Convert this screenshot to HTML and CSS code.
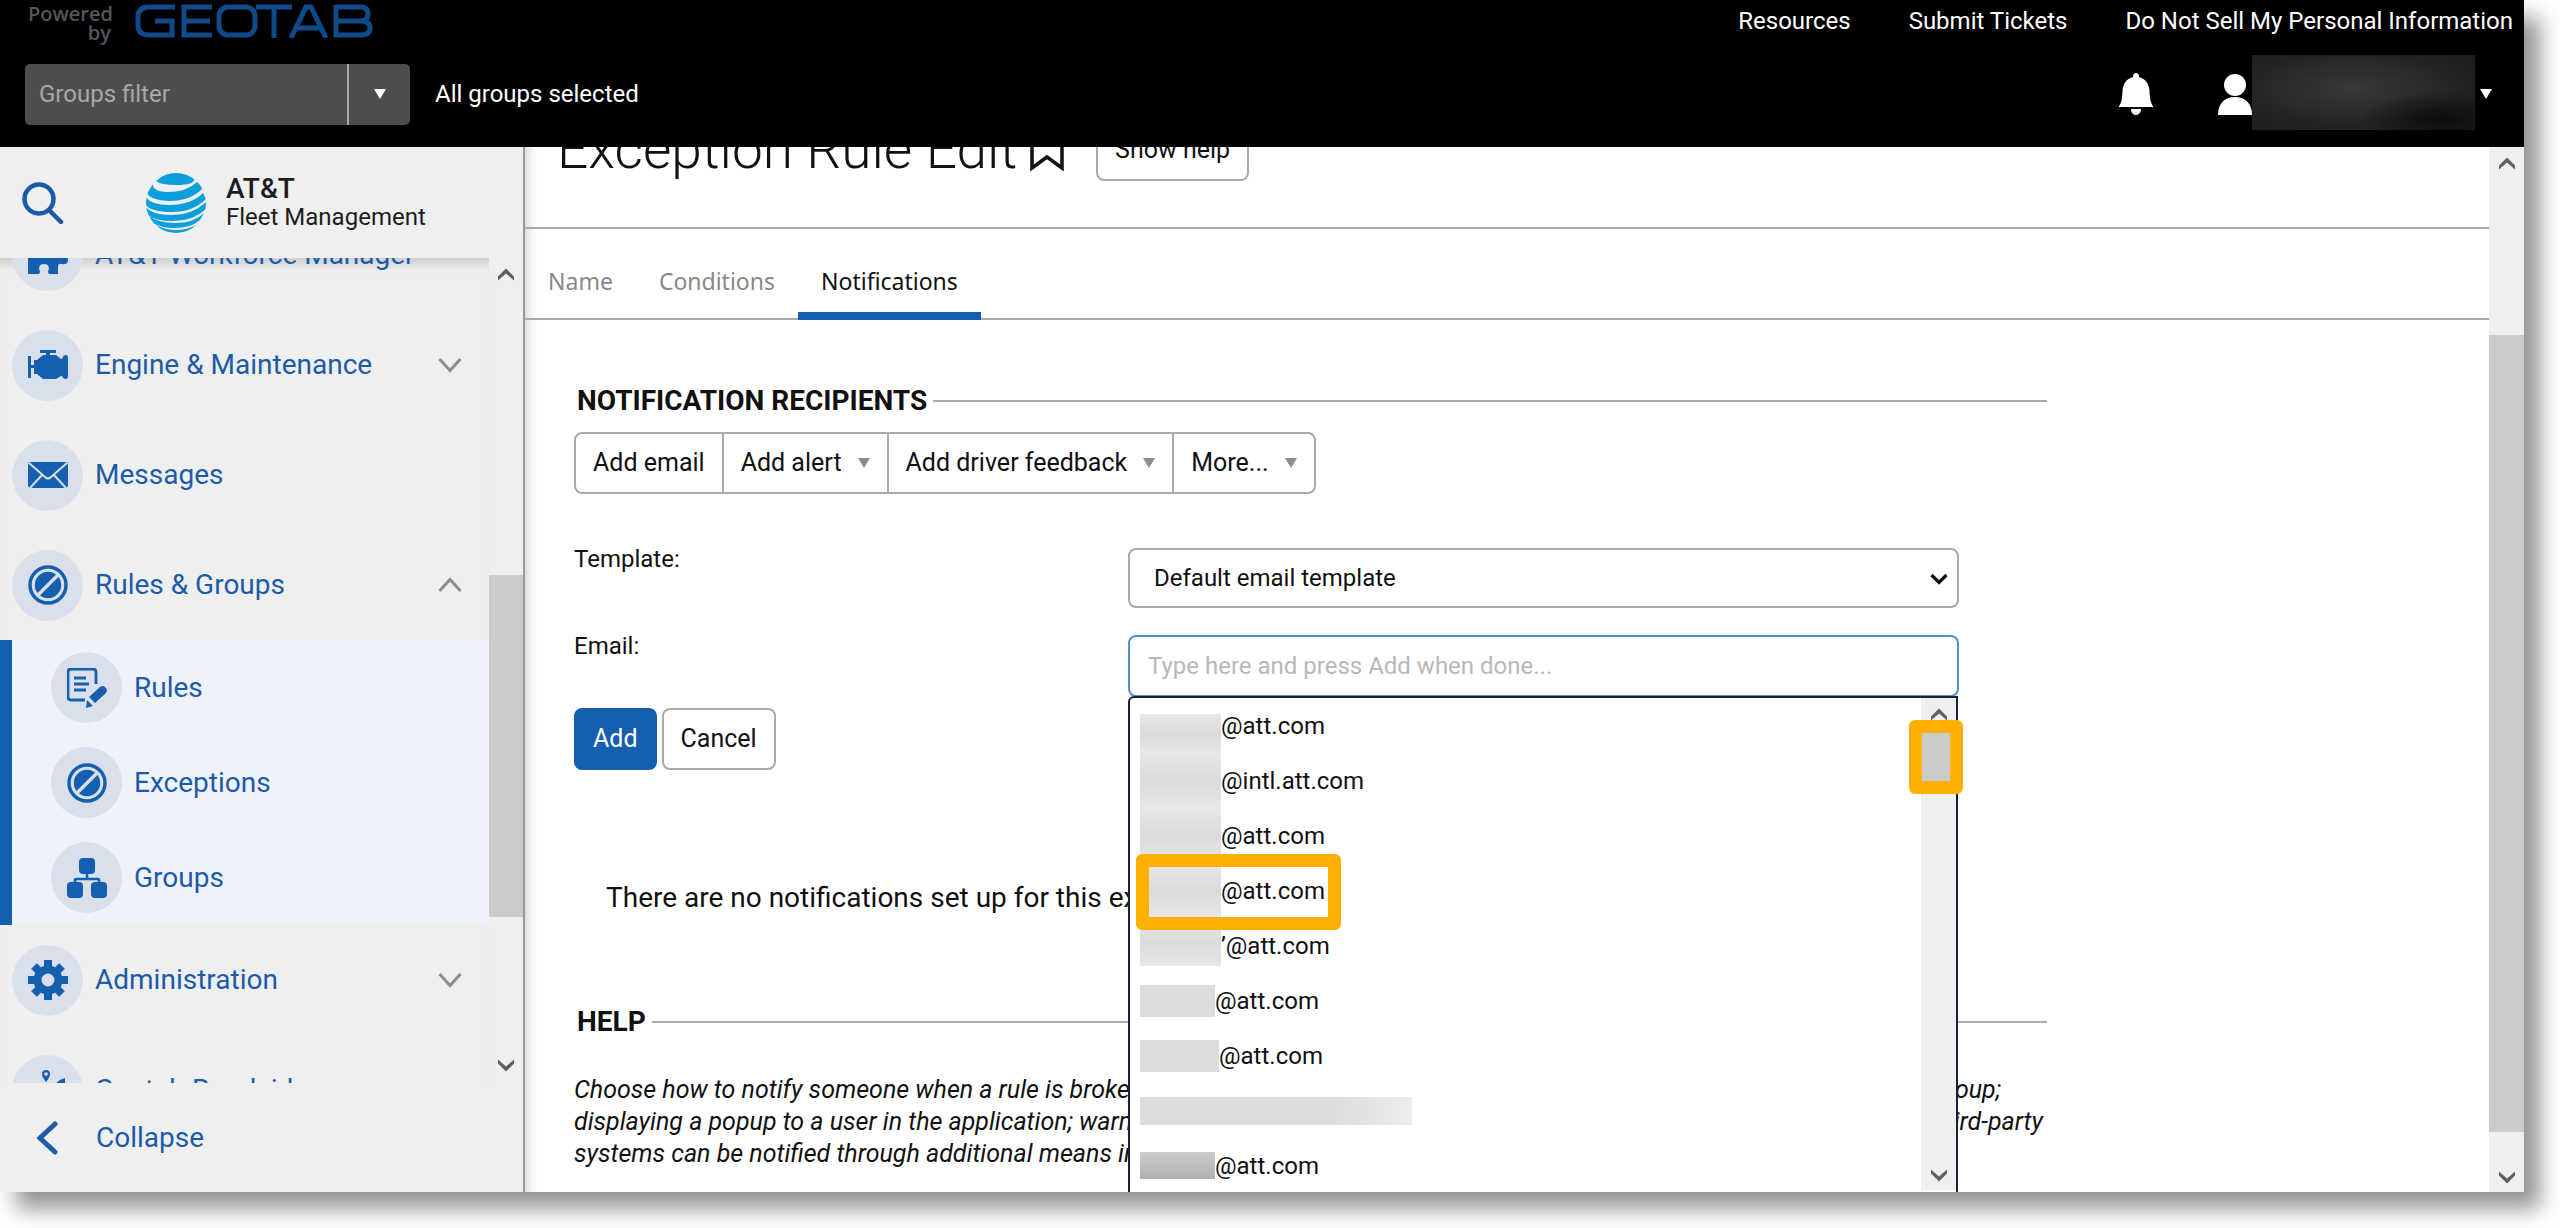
FILE: index.html
```html
<!DOCTYPE html>
<html lang="en">
<head>
<meta charset="utf-8">
<title>Exception Rule Edit</title>
<link rel="stylesheet" href="styles.css">
</head>
<body>
<svg class="sprite" aria-hidden="true">
  <symbol id="ban" viewBox="0 0 40 40"><circle cx="20" cy="20" r="18" fill="none" stroke="currentColor" stroke-width="3.4"/><circle cx="20" cy="20" r="13.2" fill="currentColor"/><path d="M10 30 30 10" stroke="#d9dfeb" stroke-width="3.4"/></symbol>
  <symbol id="down" viewBox="0 0 24 16"><path d="M1.500 2 12 13.500 22.500 2" fill="none" stroke="currentColor" stroke-width="3"/></symbol>
  <symbol id="up" viewBox="0 0 24 16"><path d="M1.500 14 12 2.500 22.500 14" fill="none" stroke="currentColor" stroke-width="3"/></symbol>
  <symbol id="bar-up" viewBox="0 0 18 14"><path d="M1 12.500v-4L9 .5l8 8v4L9 5.500z" fill="currentColor"/></symbol>
  <symbol id="bar-down" viewBox="0 0 18 14"><path d="M1 1.500v4l8 8 8-8v-4L9 8.500z" fill="currentColor"/></symbol>
  <symbol id="tri" viewBox="0 0 12 10"><path d="M0 0h12L6 10z" fill="currentColor"/></symbol>
</svg>

<div class="app">
  <header class="top">
    <div class="top-row">
      <div class="powered">
        <span class="powered-by">Powered<br>by</span>
        <svg class="geotab" viewBox="0 0 238 34" role="img" aria-label="Geotab">
          <g fill="none" stroke="currentColor" stroke-width="5">
            <path d="M40 3H14Q3 3 3 13v8q0 10 11 10h23V17H20"/>
            <path d="M77 3H49v28h28M49 17h26"/>
            <rect x="84" y="3" width="36" height="28" rx="9"/>
            <path d="M121 3h36M139 3v31"/>
            <path d="m156 34 15-31h5l15 31M161 24h25"/>
            <path d="M201 3h24q8 0 8 7t-8 7h-24m24 0q10 0 10 7t-10 7h-24V1"/>
          </g>
        </svg>
      </div>
      <nav class="top-links">
        <a href="#">Resources</a>
        <a href="#">Submit Tickets</a>
        <a href="#">Do Not Sell My Personal Information</a>
      </nav>
    </div>
    <div class="filter-row">
      <div class="filter">
        <input type="text" placeholder="Groups filter" aria-label="Groups filter">
        <button type="button" aria-label="Open groups filter"><svg class="tri"><use href="#tri"/></svg></button>
      </div>
      <span class="selected">All groups selected</span>
      <div class="account">
        <button type="button" class="bare bell" aria-label="Alerts"><svg width="36" height="42" viewBox="0 0 36 42"><path d="M18 0c2 0 3 1.500 3 4 7 2 10 7 10.500 14 .4 8 1.200 12 4 16H.5c3-4 3.700-8 4-16C5 11 8 6 15 4c0-2.500 1-4 3-4zM13 36h10c0 3.500-2 6-5 6s-5-2.500-5-6z" fill="currentColor"/></svg></button>
        <button type="button" class="bare user" aria-label="Account"><svg width="34" height="41" viewBox="0 0 34 41"><ellipse cx="17" cy="11" rx="11" ry="11" fill="currentColor"/><path d="M0 41c0-11 6-18 17-18s17 7 17 18z" fill="currentColor"/></svg><span class="redacted-name"></span><svg class="tri"><use href="#tri"/></svg></button>
      </div>
    </div>
  </header>

  <div class="body">
    <aside class="side">
      <div class="brand">
        <button type="button" class="bare search" aria-label="Search"><svg width="42" height="42" viewBox="0 0 42 42" fill="none" stroke="currentColor" stroke-width="4.500"><circle cx="17" cy="17" r="14.500"/><path d="m27 28 12 12" stroke-linecap="round"/></svg></button>
        <svg class="globe" viewBox="0 0 60 62"><defs><clipPath id="ball"><circle cx="30" cy="31" r="30"/></clipPath></defs>
          <g clip-path="url(#ball)" fill="#0c9fdc">
            <path d="M10 9Q30-10 48 6q2 7-17 7Q14 13 10 9z"/>
            <path d="M7 12q-1 7 14 8 20 0 30-10 6 2 5 7-12 12-32 12Q4 28 1 21z"/>
            <path d="M-1 24q5 9 24 9 22 0 34-12l3 6q-13 13-34 13Q5 40 0 33z"/>
            <path d="M-1 34q6 9 26 9 22 0 36-14v7q-13 13-34 13Q9 49 2 43z"/>
            <path d="M3 44q9 7 26 7 19 0 29-10l-4 7q-9 8-26 8-13 0-21-5z"/>
            <path d="M10 53q9 5 20 5t20-5l-7 6q-13 4-27 0z"/>
          </g></svg>
        <div class="brand-name"><strong>AT&amp;T</strong><span>Fleet Management</span></div>
      </div>
      <div class="side-scroll">
        <nav class="menu">
          <a class="item" href="#"><span class="disc"><svg viewBox="0 0 40 40"><path d="M0 12h10c-3-6 0-10 5-10s8 4 5 10h10v8q0 4 3 2 7-3 7 3 0 5-6 4-4-1-4 3v7h-9q-2-2 0-5 0-5-5-5t-5 5q2 3 0 5H0z" fill="currentColor"/></svg></span>AT&amp;T Workforce Manager</a>
          <a class="item" href="#"><span class="disc"><svg viewBox="0 0 40 40"><path d="M0 11h3v9h3v-5h3l6-5h3V8h-6V5h16v3h-6v2h6l5 4h1q1-4 4-4 2 0 2 3v18q0 3-2 3-3 0-4-3h-1l-5 3H15l-6-5H6v-6H3v10H0z" fill="currentColor"/></svg></span>Engine &amp; Maintenance<svg class="chev"><use href="#down"/></svg></a>
          <a class="item" href="#"><span class="disc"><svg viewBox="0 0 40 40"><rect y="7" width="40" height="26" rx="3" fill="currentColor"/><path d="m1 8 16 14q3 3 6 0L39 8M2 33l12-13M38 33 26 20" fill="none" stroke="#d9dfeb" stroke-width="2"/></svg></span>Messages</a>
          <a class="item" href="#"><span class="disc"><svg><use href="#ban"/></svg></span>Rules &amp; Groups<svg class="chev"><use href="#up"/></svg></a>
          <div class="sub">
            <a class="item" href="#"><span class="disc"><svg viewBox="0 0 40 40"><path d="M18 32H4q-3 0-3-3V4q0-3 3-3h22q3 0 3 3v12M7 10h12M7 16h15M7 22h12" fill="none" stroke="currentColor" stroke-width="2.800"/><path d="m22 29 11-10q3-2 5.500 0.500t0.500 5.500L28 35zM20 32l6 6-7 2z" fill="currentColor"/></svg></span>Rules</a>
            <a class="item" href="#"><span class="disc"><svg><use href="#ban"/></svg></span>Exceptions</a>
            <a class="item" href="#"><span class="disc"><svg viewBox="0 0 40 40"><g fill="currentColor"><rect x="12" width="16" height="16" rx="4"/><rect y="24" width="16" height="16" rx="4"/><rect x="24" y="24" width="16" height="16" rx="4"/></g><path d="M20 14v7M8 26v-4q0-1 1-1h22q1 0 1 1v4" fill="none" stroke="currentColor" stroke-width="2.600"/></svg></span>Groups</a>
          </div>
          <a class="item" href="#"><span class="disc"><svg viewBox="0 0 40 40"><circle cx="20" cy="20" r="10.500" fill="none" stroke="currentColor" stroke-width="8"/><path d="M20 0v8M20 32v8M0 20h8M32 20h8M6 6l6 6M28 28l6 6M34 6l-6 6M12 28l-6 6" stroke="currentColor" stroke-width="8"/></svg></span>Administration<svg class="chev"><use href="#down"/></svg></a>
          <a class="item" href="#"><span class="disc"><svg viewBox="0 0 40 40"><path d="M18 12q-4-5-4-8a4 4 0 0 1 8 0q0 3-4 8zM28 14q2-4 9-6v7q-6 0-8 6z" fill="currentColor"/><circle cx="18" cy="4" r="1.800" fill="#d9dfeb"/></svg></span>Geotab Roadside</a>
        </nav>
        <div class="bar side-bar"><svg><use href="#bar-up"/></svg><i class="before"></i><i class="thumb"></i><i class="after"></i><svg><use href="#bar-down"/></svg></div>
      </div>
      <button type="button" class="bare collapse"><svg width="22" height="34" viewBox="0 0 22 34"><path d="M19 3 4 17l15 14" fill="none" stroke="currentColor" stroke-width="5" stroke-linecap="round"/></svg>Collapse</button>
    </aside>

    <main class="main">
      <div class="content">
        <div class="title">
          <h1>Exception Rule Edit</h1>
          <svg class="bookmark" viewBox="0 0 34 42"><path d="M2 0v38l15-11 15 11V0" fill="none" stroke="currentColor" stroke-width="3.500"/></svg>
          <button type="button" class="btn">Show help</button>
        </div>
        <nav class="tabs">
          <a href="#">Name</a><a href="#">Conditions</a><a href="#" class="on" aria-current="page">Notifications</a>
        </nav>
        <div class="page">
          <h2>NOTIFICATION RECIPIENTS</h2>
          <div class="group">
            <button type="button">Add email</button>
            <button type="button">Add alert <svg class="tri"><use href="#tri"/></svg></button>
            <button type="button">Add driver feedback <svg class="tri"><use href="#tri"/></svg></button>
            <button type="button">More... <svg class="tri"><use href="#tri"/></svg></button>
          </div>
          <form class="form">
            <label for="template">Template:</label>
            <div class="field select">
              <select id="template"><option>Default email template</option></select>
              <svg viewBox="0 0 18 12"><path d="m1.500 2 7.500 7.500L16.500 2" fill="none" stroke="currentColor" stroke-width="3.200"/></svg>
            </div>
            <label for="email">Email:</label>
            <div class="field">
              <input id="email" type="text" placeholder="Type here and press Add when done...">
              <div class="list">
                <ul>
                  <li><i class="mask start"></i>@att.com</li>
                  <li><i class="mask"></i>@intl.att.com</li>
                  <li><i class="mask"></i>@att.com</li>
                  <li><i class="mask"></i>@att.com<b class="ring ring-option"></b></li>
                  <li><i class="mask end"></i>’@att.com</li>
                  <li><i class="mask short"></i>@att.com</li>
                  <li><i class="mask mid"></i>@att.com</li>
                  <li><i class="mask wide"></i></li>
                  <li><i class="mask short dark"></i>@att.com</li>
                </ul>
                <div class="bar list-bar"><svg><use href="#bar-up"/></svg><i class="thumb"><b class="ring ring-thumb"></b></i><i class="after"></i><svg><use href="#bar-down"/></svg></div>
              </div>
            </div>
            <div class="actions">
              <button type="submit" class="btn primary">Add</button>
              <button type="button" class="btn">Cancel</button>
            </div>
          </form>
          <p class="empty">There are no notifications set up for this exception rule.</p>
          <h2>HELP</h2>
          <div class="help">
            <p class="line first"><span>Choose how to notify someone when a rule is broken. Options include: emailing a</span> <span>person or group;</span></p>
            <p class="line"><span>displaying a popup to a user in the application; warning the driver in the vehicle.</span> <span>Third-party</span></p>
            <p class="line"><span>systems can be notified through additional means including web requests.</span></p>
          </div>
        </div>
      </div>
      <div class="bar main-bar"><svg><use href="#bar-up"/></svg><i class="before"></i><i class="thumb"></i><i class="after"></i><svg><use href="#bar-down"/></svg></div>
    </main>
  </div>
</div>
</body>
</html>
```
FILE: styles.css
```css
* { box-sizing: border-box; }

body {
  margin: 0;
  padding: 0 36px 36px 0;
  height: 100vh;
  overflow: hidden;
  background: #fff;
  color: #111;
  font: 24px/32px Roboto, "Liberation Sans", sans-serif;
}

a { color: inherit; text-decoration: none; }
button, input, select { font: inherit; color: inherit; margin: 0; cursor: pointer; }
h1, h2, p, ul { margin: 0; padding: 0; font: inherit; }
ul { list-style: none; }
.sprite { position: absolute; width: 0; height: 0; }
.bare { background: none; border: 0; padding: 0; }
.tri { width: 12px; height: 10px; flex: none; }

.app {
  display: flex;
  flex-direction: column;
  height: 100%;
  box-shadow: 16px 17px 20px #969696;
}

/* Header */
.top { height: 147px; flex: none; background: #000; color: #fff; overflow: hidden; }
.top-row { display: flex; justify-content: space-between; height: 44px; padding: 0 11px 0 28px; }
.powered { display: flex; gap: 24px; padding-top: 4px; }
.powered-by { width: 83px; color: #55555a; font: 600 20px/19px "Open Sans", sans-serif; text-align: right; }
.geotab { width: 238px; height: 34px; color: #0f4a8a; }
.top-links { display: flex; gap: 58px; padding-top: 5px; }
.filter-row { display: flex; align-items: center; height: 100px; padding: 0 32px 0 25px; }
.filter { display: flex; width: 385px; height: 61px; border-radius: 5px; overflow: hidden; background: #4d4d4d; }
.filter input { flex: 1; min-width: 0; padding: 0 14px; background: none; border: 0; }
.filter input::placeholder { color: #a8a8a8; opacity: 1; }
.filter button { width: 63px; padding: 0; background: none; border: 0; border-left: 2px solid #aaa; color: #fff; }
.filter .tri { display: block; margin: auto; }
.selected { margin-left: 25px; }
.account { display: flex; align-items: center; gap: 64px; margin-left: auto; color: #fff; }
.bare svg { display: block; }
.user { display: flex; align-items: center; color: #fff; }
.bell { color: #fff; }
.redacted-name { width: 223px; height: 75px; margin: 0 5px 4px 0; background: radial-gradient(ellipse at 85% 85%, #0c0c0c, transparent 30%), radial-gradient(ellipse at 45% 45%, #383838, #242424 60%, #1c1c1c); }

/* Scroll bars */
.bar { display: flex; flex-direction: column; align-items: center; width: 35px; flex: none; padding: 10px 0 8px; background: #efefef; color: #606060; }
.bar svg { width: 18px; height: 14px; flex: none; }
.bar .thumb { width: 100%; background: #cbcbcb; }

/* Sidebar */
.body { display: flex; flex: 1; min-height: 0; }
.side { display: flex; flex-direction: column; width: 525px; flex: none; background: #efefef; border-right: 2px solid #999; color: #1c5ba8; }
.brand { display: flex; align-items: center; height: 111px; flex: none; padding-left: 22px; }
.search { color: #1b5aa6; }
.globe { width: 60px; height: 62px; margin: 0 20px 0 82px; }
.brand-name { display: flex; flex-direction: column; color: #1d1d1d; font-size: 24px; line-height: 29px; }
.brand-name strong { font-size: 28px; font-weight: 500; }
.side-scroll { display: flex; flex: 1; min-height: 0; overflow: hidden; }
.menu { flex: 1; overflow: hidden; display: flex; flex-direction: column; justify-content: flex-end; box-shadow: inset 0 14px 12px -10px #c4c4c4; }
.item { display: flex; align-items: center; gap: 12px; height: 110px; flex: none; padding: 0 27px 0 12px; font-size: 28px; }
.disc { display: flex; align-items: center; justify-content: center; width: 71px; height: 71px; flex: none; border-radius: 50%; background: #d9dfeb; color: #155fb0; }
.disc svg { width: 40px; height: 40px; }
.chev { width: 24px; height: 16px; margin-left: auto; color: #8c8c8c; }
.sub { flex: none; padding-left: 27px; background: #eff2f9; border-left: 12px solid #155fb0; }
.sub .item { height: 95px; }
.menu > .item:last-child { margin-bottom: -62px; }
.collapse { display: flex; align-items: center; gap: 38px; height: 109px; flex: none; padding-left: 36px; font-size: 28px; color: #1c5ba8; }
.side-bar { width: 34px; padding-bottom: 11px; }
.side-bar .before { flex: 293; }
.side-bar .thumb { flex: 342; }
.side-bar .after { flex: 141; }

/* Main */
.main { display: flex; flex: 1; min-width: 0; background: #fff; }
.content { flex: 1; min-width: 0; overflow: hidden; box-shadow: inset 14px 0 12px -12px #ccc; }
.title { display: flex; align-items: flex-end; height: 82px; border-bottom: 2px solid #aaa; padding: 0 0 46px 32px; }
h1 { font-size: 55px; line-height: 64px; font-weight: 300; white-space: nowrap; }
.bookmark { width: 34px; height: 42px; margin: 0 32px 9px 13px; }
.btn { height: 62px; padding: 0 17px; border: 2px solid #aaa; border-radius: 8px; background: #fff; font-size: 25px; }
.primary { background: #155fb0; border-color: #155fb0; color: #fff; }
.tabs { display: flex; height: 91px; border-bottom: 2px solid #aaa; font-family: "Noto Sans", sans-serif; font-size: 23px; color: #888; }
.tabs a { height: 91px; padding: 36px 23px 0; border-bottom: 8px solid transparent; }
.tabs .on { color: #111; border-color: #155fb0; }
.page { width: 78%; max-width: 1522px; padding: 65px 0 0 49px; }
h2 { display: flex; align-items: center; gap: 6px; padding-left: 3px; font-size: 28px; font-weight: 700; }
h2::after { content: ""; flex: 1; height: 2px; background: #aaa; }
.group { display: inline-flex; height: 62px; margin-top: 15px; border: 2px solid #aaa; border-radius: 8px; font-size: 25px; }
.group button { display: flex; align-items: center; gap: 16px; padding: 0 17px; background: none; border: 0; white-space: nowrap; }
.group button + button { border-left: 2px solid #aaa; }
.group .tri { color: #8c8c8c; }
.form { display: grid; grid-template-columns: 554px 831px; row-gap: 22px; margin-top: 49px; }
.field { position: relative; height: 60px; margin-top: 5px; }
.field select, .field input { width: 100%; height: 60px; padding: 0 24px; border: 2px solid #aaa; border-radius: 8px; background: #fff; appearance: none; }
.field input { height: 62px; padding: 0 18px; border-color: #5590c8; }
.field input::placeholder { color: #b8b8b8; opacity: 1; }
.select svg { position: absolute; right: 11px; top: 25px; width: 18px; height: 12px; }
.actions { display: flex; gap: 5px; margin-top: -9px; }
.list { position: absolute; z-index: 2; top: 61px; left: 0; right: 1px; display: flex; height: 520px; background: #fff; border: 2px solid #14223a; border-radius: 6px 0 0 0; }
.list ul { flex: 1; }
.list li { position: relative; display: flex; align-items: center; height: 55px; padding-left: 10px; }
.mask { width: 81px; height: 55px; flex: none; background: linear-gradient(#e8e8e8, #dadada 50%, #e8e8e8); }
.start { height: 39px; align-self: flex-end; }
.end { height: 48px; align-self: flex-start; }
.short { width: 75px; height: 32px; background: #dcdcdc; }
.mid { width: 79px; height: 32px; background: #dcdcdc; }
.wide { width: 272px; height: 28px; background: linear-gradient(90deg, #dcdcdc 70%, #ededed); }
.dark { height: 27px; background: linear-gradient(#ccc, #b0b0b0); }
.list-bar { height: 492px; }
.list-bar .thumb { position: relative; height: 62px; }
.list-bar .after { flex: 1; }
.ring { position: absolute; z-index: 1; border: 13px solid #ffb000; border-radius: 6px; }
.ring-option { left: 6px; top: -9px; width: 205px; height: 76px; }
.ring-thumb { left: -12px; right: -7px; top: -2px; bottom: -10px; }
.empty { padding: 112px 0 92px 32px; font-size: 28px; }
.help { margin-top: 36px; font-size: 25px; font-style: italic; white-space: nowrap; }
.line { display: flex; justify-content: space-between; padding-right: 4px; }
.first { padding-right: 46px; }
.main-bar .before { flex: 164; }
.main-bar .thumb { flex: 796; }
.main-bar .after { flex: 38; }
```
